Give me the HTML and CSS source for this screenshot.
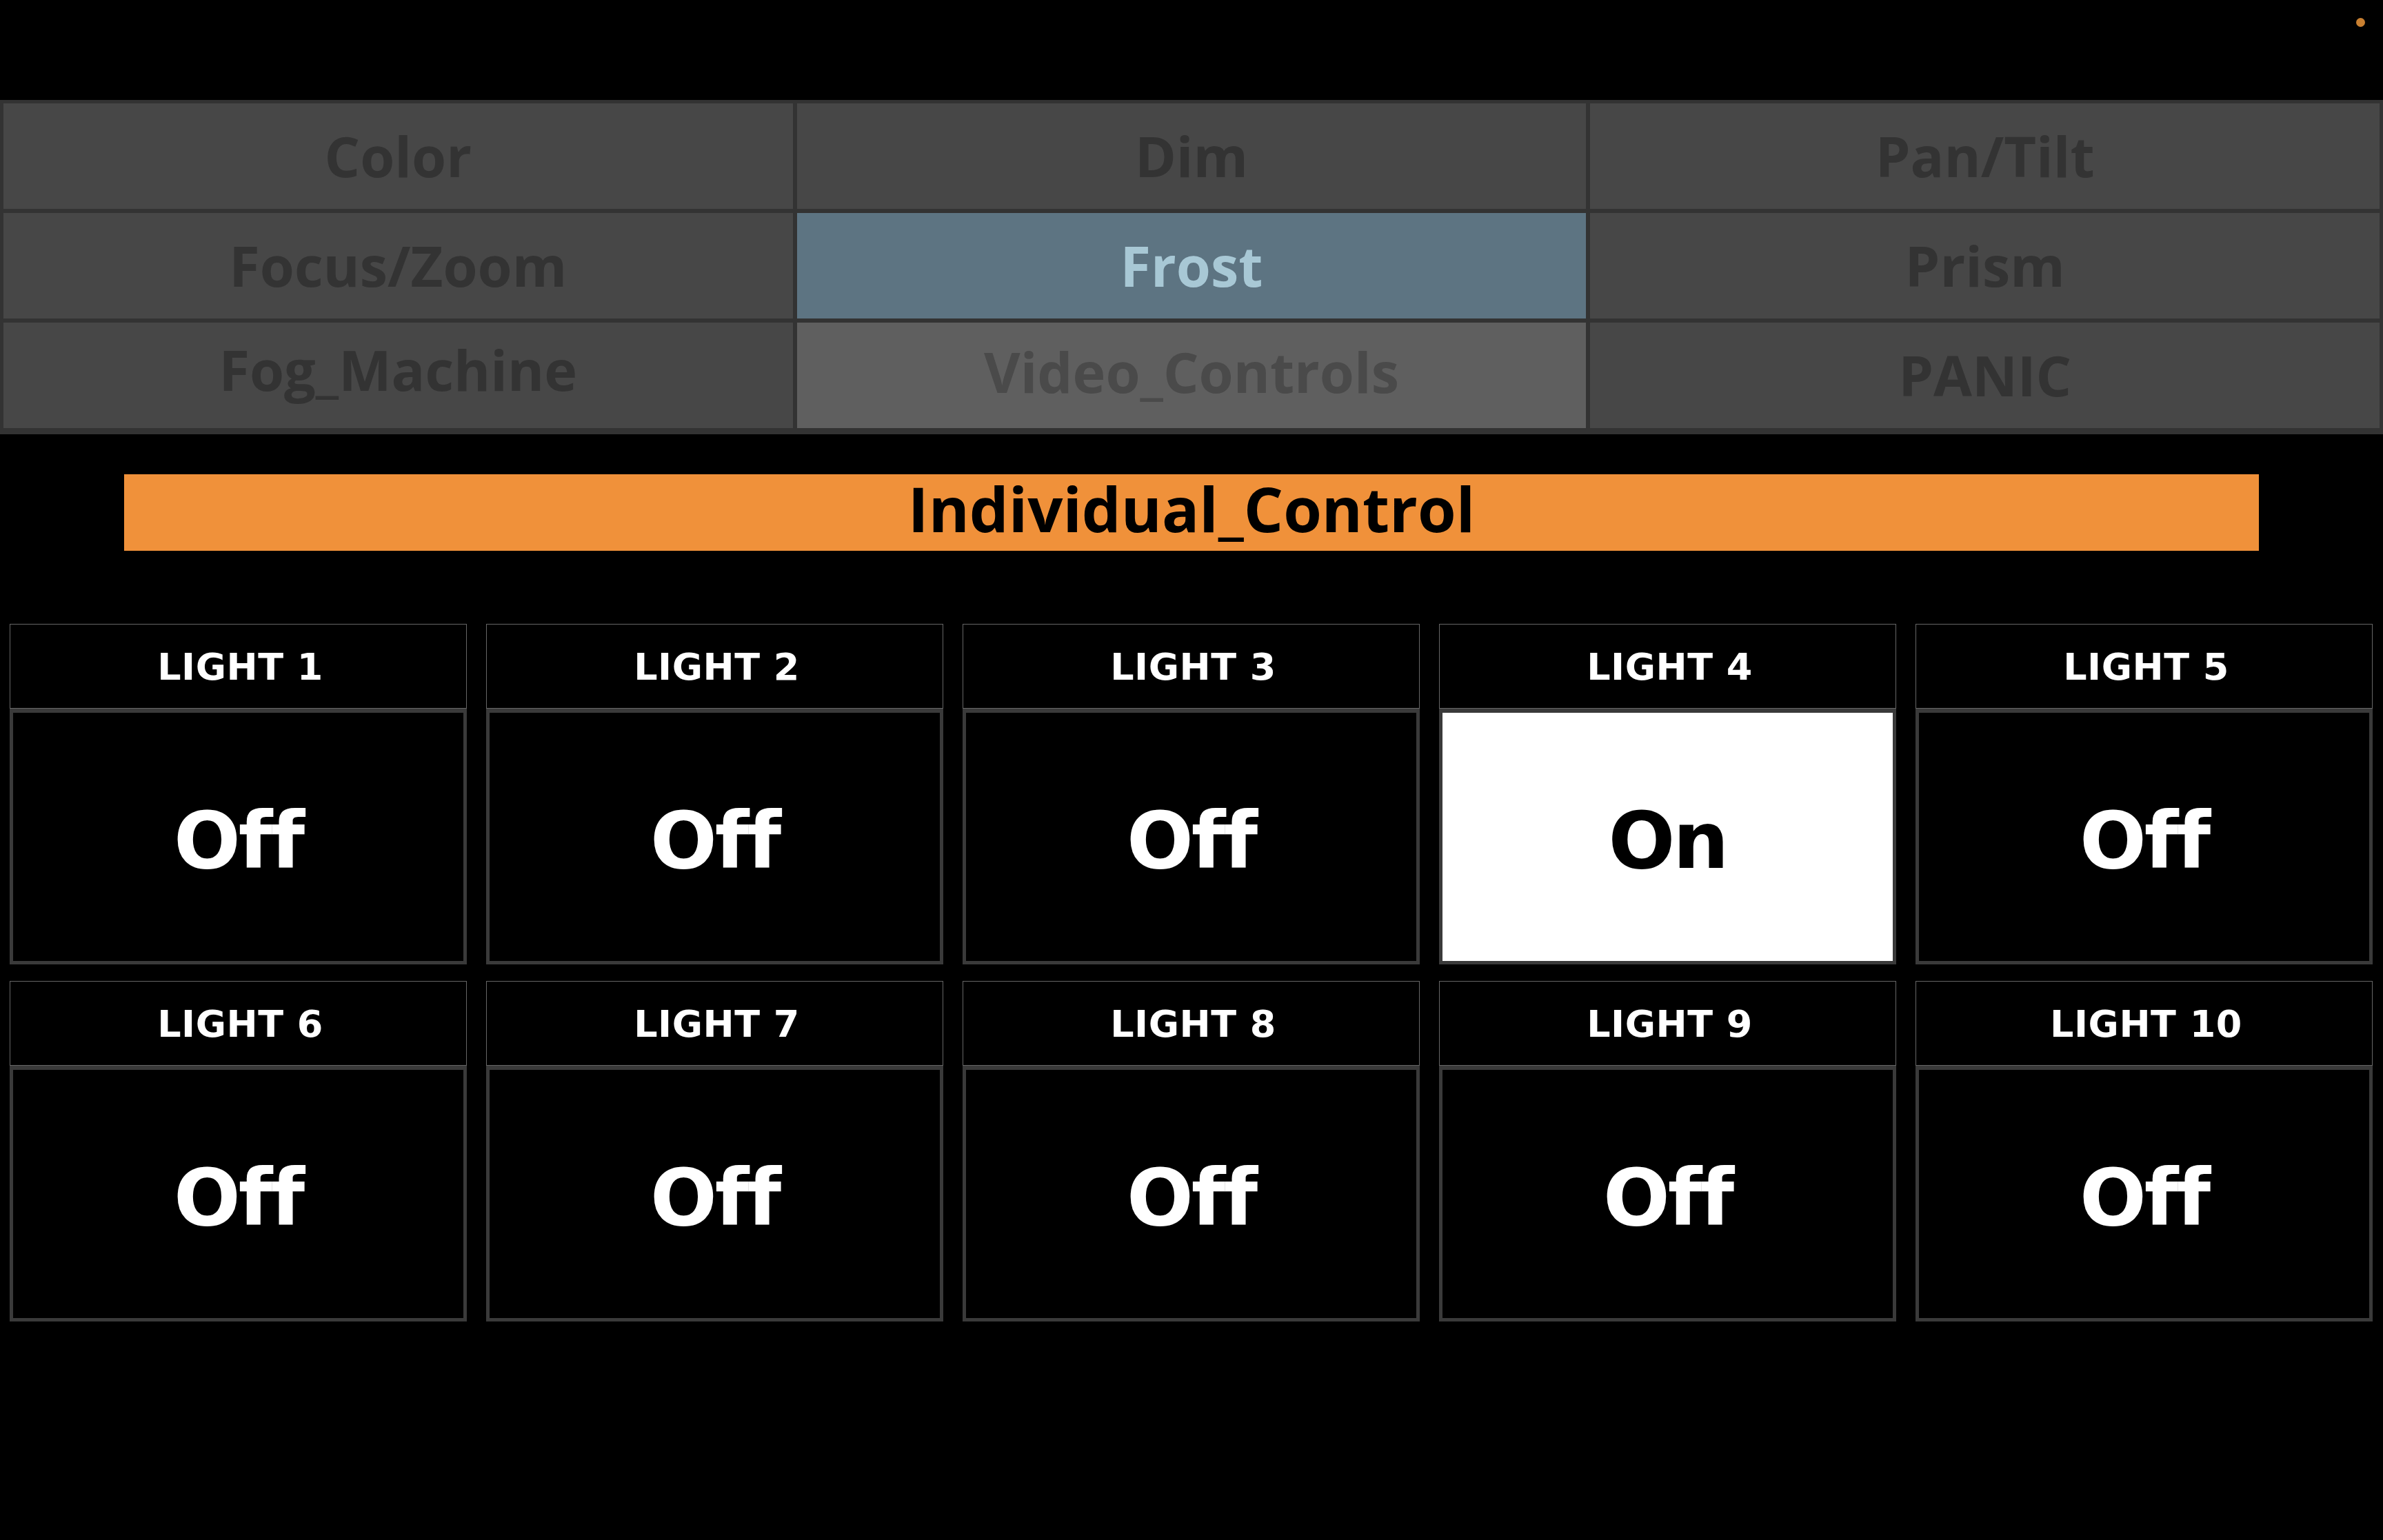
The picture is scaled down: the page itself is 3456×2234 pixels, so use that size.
FILE: index.html
```html
<!DOCTYPE html>
<html lang="en">
<head>
<meta charset="utf-8">
<title>Lighting Control</title>
<link rel="stylesheet" href="styles.css">
</head>
<body>
<div class="app">
  <header class="topbar">
    <span class="status-dot"></span>
  </header>

  <nav class="tabs">
    <div class="tab">Color</div>
    <div class="tab">Dim</div>
    <div class="tab">Pan/Tilt</div>
    <div class="tab">Focus/Zoom</div>
    <div class="tab tab-active">Frost</div>
    <div class="tab">Prism</div>
    <div class="tab tab-fog">Fog_Machine</div>
    <div class="tab tab-video">Video_Controls</div>
    <div class="tab tab-panic">PANIC</div>
  </nav>

  <div class="title-bar">Individual_Control</div>

  <section class="lights">
    <div class="light"><div class="light-head">LIGHT 1</div><div class="light-body">Off</div></div>
    <div class="light"><div class="light-head">LIGHT 2</div><div class="light-body">Off</div></div>
    <div class="light"><div class="light-head">LIGHT 3</div><div class="light-body">Off</div></div>
    <div class="light"><div class="light-head">LIGHT 4</div><div class="light-body light-on">On</div></div>
    <div class="light"><div class="light-head">LIGHT 5</div><div class="light-body">Off</div></div>
    <div class="light"><div class="light-head">LIGHT 6</div><div class="light-body">Off</div></div>
    <div class="light"><div class="light-head">LIGHT 7</div><div class="light-body">Off</div></div>
    <div class="light"><div class="light-head">LIGHT 8</div><div class="light-body">Off</div></div>
    <div class="light"><div class="light-head">LIGHT 9</div><div class="light-body">Off</div></div>
    <div class="light"><div class="light-head">LIGHT 10</div><div class="light-body">Off</div></div>
  </section>
</div>
</body>
</html>
```

FILE: styles.css
```css
html, body {
  margin: 0;
  padding: 0;
  background: #000;
}

.app {
  width: 3456px;
  min-height: 2234px;
  background: #000;
  display: flex;
  flex-direction: column;
}

.topbar {
  height: 145px;
  box-sizing: border-box;
  display: flex;
  justify-content: flex-end;
  align-items: flex-start;
  padding: 26px 26px 0 0;
}

.status-dot {
  width: 13px;
  height: 13px;
  border-radius: 50%;
  background: #c98031;
}

.tabs {
  display: grid;
  grid-template-columns: repeat(3, 1fr);
  padding: 2px 2px 6px 2px;
  background: #333333;
}

.tab {
  height: 159px;
  box-sizing: border-box;
  border: 3px solid #333333;
  background: #474747;
  color: #333333;
  display: flex;
  align-items: center;
  justify-content: center;
  padding-bottom: 2px;
  font-family: "Open Sans", "Noto Sans", sans-serif;
  font-weight: 700;
  font-size: 81px;
  line-height: 1;
}

.tab-active {
  background: #5d7482;
  color: #a8c8d5;
}

.tab-video {
  background: #5f5f5f;
  color: #4a4a4a;
  padding-bottom: 13px;
}

.tab-fog {
  padding-bottom: 18px;
}

.tab-panic {
  padding-bottom: 3px;
}

.title-bar {
  margin: 58px 180px 0 180px;
  height: 111px;
  box-sizing: border-box;
  padding-bottom: 14px;
  background: #f0913a;
  color: #000;
  display: flex;
  align-items: center;
  justify-content: center;
  font-family: "Open Sans", "Noto Sans", sans-serif;
  font-weight: 700;
  font-size: 90px;
  line-height: 1;
}

.lights {
  margin-top: 106px;
  padding: 0 15px 0 14px;
  display: grid;
  grid-template-columns: repeat(5, 663px);
  column-gap: 28px;
  row-gap: 24px;
}

.light {
  display: flex;
  flex-direction: column;
}

.light-head {
  height: 123px;
  box-sizing: border-box;
  border: 1px solid #666666;
  background: #000;
  color: #fff;
  display: flex;
  align-items: center;
  justify-content: center;
  padding: 2px 0 0 6px;
  font-family: "DejaVu Sans", "Verdana", sans-serif;
  font-weight: 700;
  font-size: 54px;
  letter-spacing: 0.5px;
  line-height: 1;
}

.light-body {
  height: 371px;
  box-sizing: border-box;
  border: 5px solid #3a3a3a;
  border-top-width: 6px;
  background: #000;
  color: #fff;
  display: flex;
  align-items: center;
  justify-content: center;
  padding-top: 11px;
  font-family: "DejaVu Sans", "Verdana", sans-serif;
  font-weight: 700;
  font-size: 114px;
  letter-spacing: -3px;
  line-height: 1;
}

.light-on {
  background: #fff;
  color: #000;
}
```
